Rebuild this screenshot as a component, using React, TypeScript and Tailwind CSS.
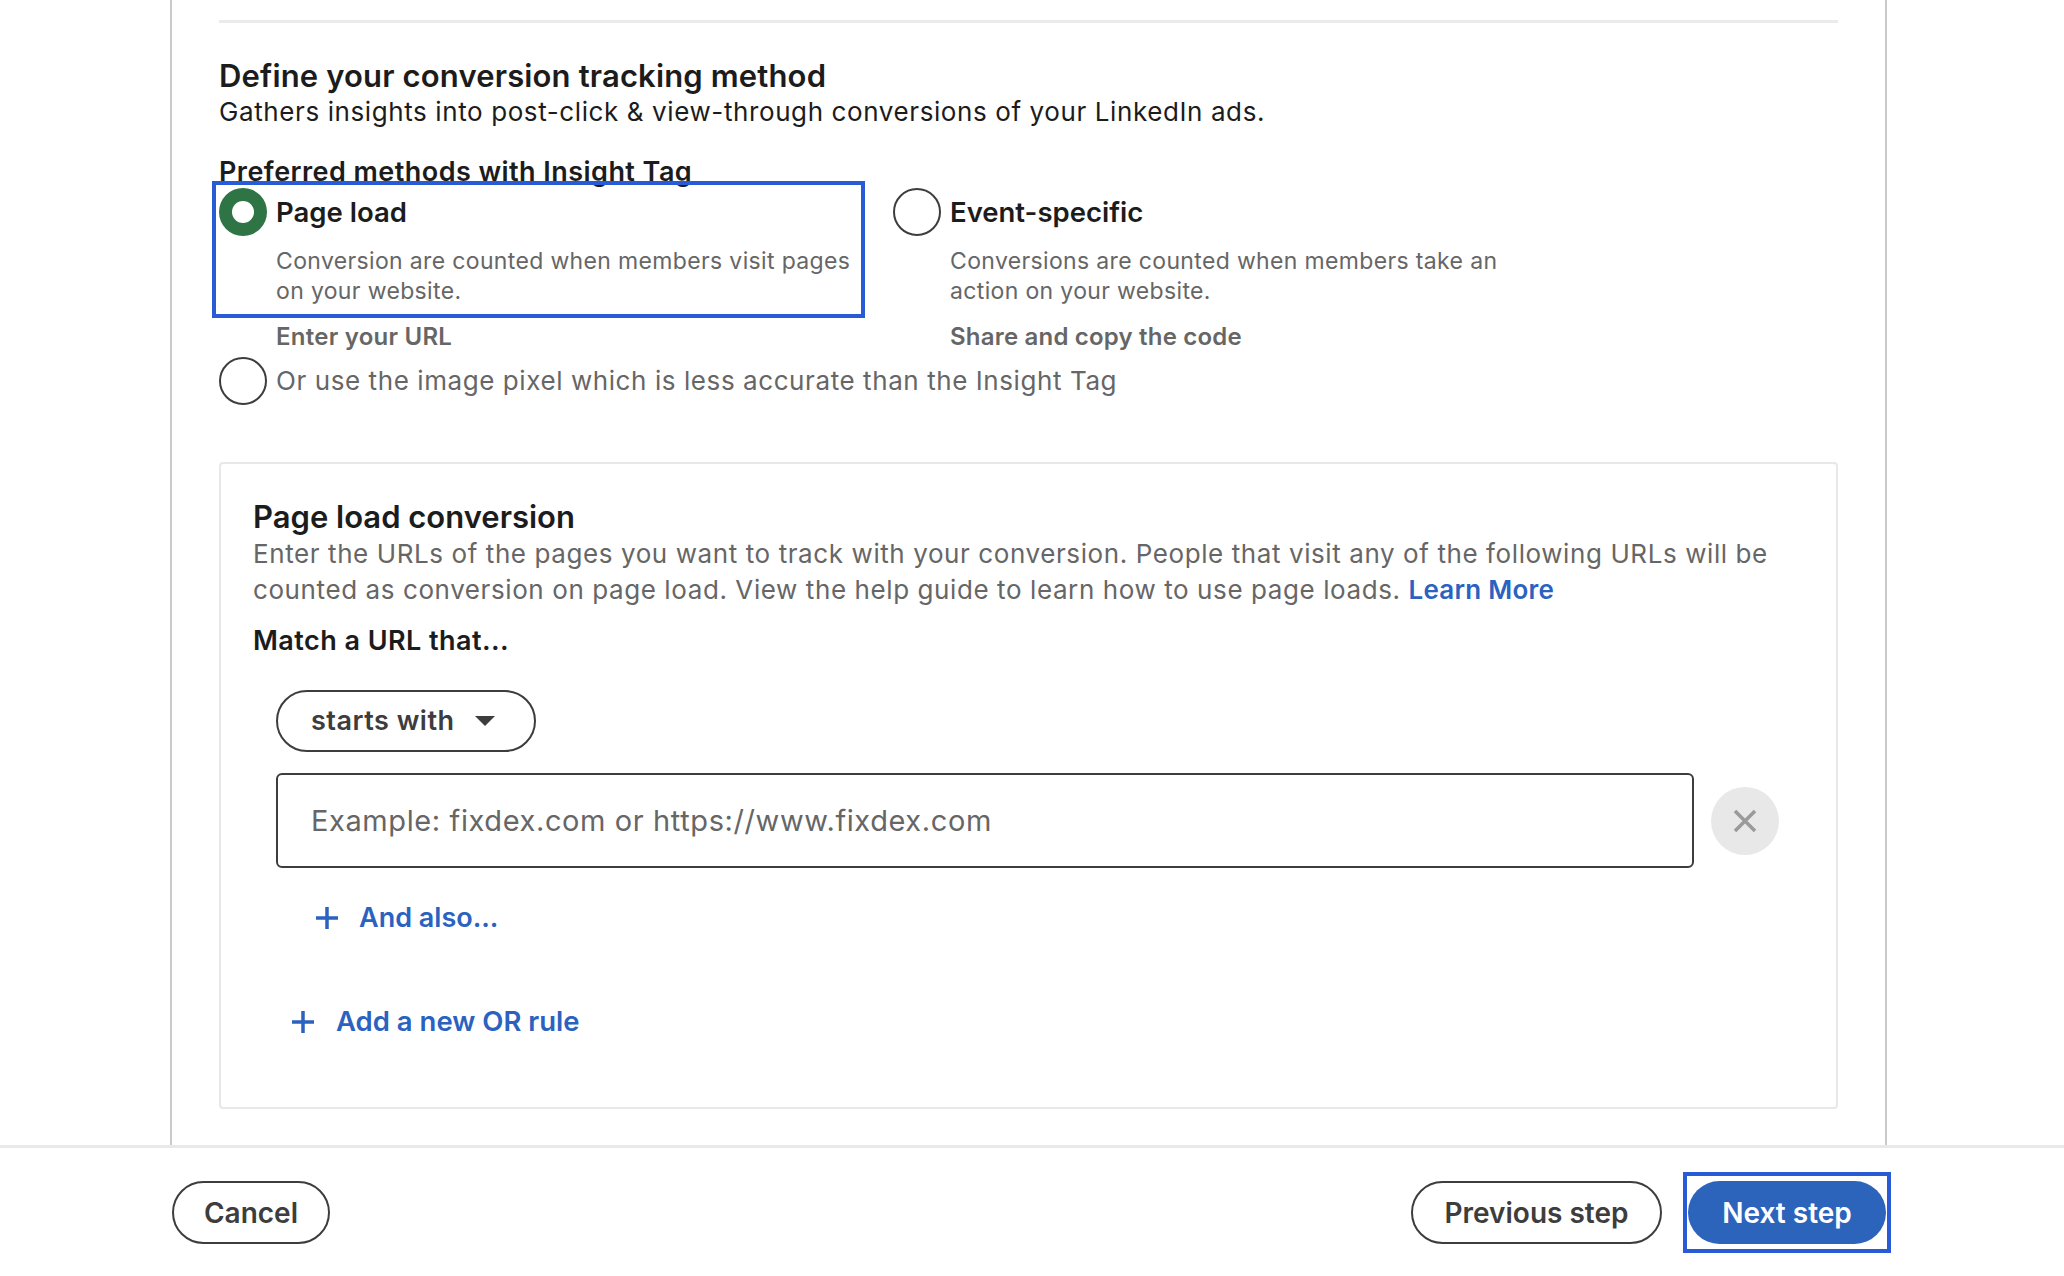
import React from 'react';

function Radio({ checked }: { checked?: boolean }) {
  if (checked) {
    return (
      <div className="w-12 h-12 shrink-0 rounded-full bg-[#2f7444] flex items-center justify-center">
        <div className="w-[22px] h-[22px] rounded-full bg-white" />
      </div>
    );
  }
  return <div className="w-12 h-12 shrink-0 rounded-full border-2 border-[#3d3d3d] bg-white" />;
}

function PlusIcon({ className }: { className?: string }) {
  return (
    <svg className={className} viewBox="0 0 24 24" fill="none" stroke="#2b62bf" strokeWidth={3.5}>
      <path d="M12 1v22M1 12h22" />
    </svg>
  );
}

export default function App() {
  return (
    <div className="w-[2064px] h-[1276px] bg-white overflow-hidden font-['Inter','Liberation_Sans',sans-serif] text-[#1c1c1c]">
      {/* Main panel */}
      <div className="ml-[170px] w-[1717px] h-[1145px] border-x-2 border-[#cacaca] px-[47px] pt-[20px]">
        <div className="h-[3px] bg-[#ebebeb]" />

        <h2 className="mt-[34px] text-[31px] leading-[38px] font-semibold tracking-[0.15px]">
          Define your conversion tracking method
        </h2>
        <p className="text-[26px] leading-[34px] tracking-[0.6px]">
          Gathers insights into post-click &amp; view-through conversions of your LinkedIn ads.
        </p>

        <p className="mt-[28px] text-[27px] leading-[30px] font-semibold tracking-[0.45px]">
          Preferred methods with Insight Tag
        </p>

        <div className="mt-[1px] grid grid-cols-[674px_1fr]">
          {/* Page load option */}
          <div>
            <div className="w-[639px] pb-[5px] outline-4 outline-[#2a5bd7] outline-offset-[3px]">
              <div className="flex items-center gap-[9px]">
                <Radio checked />
                <span className="text-[27.5px] leading-[48px] font-semibold">Page load</span>
              </div>
              <p className="ml-[57px] mt-[10px] text-[23px] leading-[30px] tracking-[0.35px] text-[#666666]">
                Conversion are counted when members visit pages
                <br />
                on your website.
              </p>
            </div>
            <p className="ml-[57px] mt-[11px] text-[24px] leading-[29px] tracking-[0.25px] font-semibold text-[#666666]">
              Enter your URL
            </p>
          </div>

          {/* Event-specific option */}
          <div>
            <div className="pb-[5px]">
              <div className="flex items-center gap-[9px]">
                <Radio />
                <span className="text-[27.5px] leading-[48px] font-semibold">Event-specific</span>
              </div>
              <p className="ml-[57px] mt-[10px] text-[23px] leading-[30px] tracking-[0.35px] text-[#666666]">
                Conversions are counted when members take an
                <br />
                action on your website.
              </p>
            </div>
            <p className="ml-[57px] mt-[11px] text-[24px] leading-[29px] tracking-[0.2px] font-semibold text-[#666666]">
              Share and copy the code
            </p>
          </div>
        </div>

        <div className="mt-[6px] flex items-center gap-[9px]">
          <Radio />
          <span className="text-[26px] leading-[48px] tracking-[0.58px] text-[#666666]">
            Or use the image pixel which is less accurate than the Insight Tag
          </span>
        </div>

        {/* Page load conversion card */}
        <div className="mt-[57px] h-[647px] border-2 border-[#e8e8e8] rounded-[4px] pl-[32px] pt-[34px]">
          <h3 className="text-[31px] leading-[38px] font-semibold">Page load conversion</h3>
          <p className="text-[26px] leading-[36px] tracking-[0.59px] text-[#666666]">
            Enter the URLs of the pages you want to track with your conversion. People that visit any of the following URLs will be
            <br />
            counted as conversion on page load. View the help guide to learn how to use page loads.{' '}
            <span className="font-semibold tracking-[0.25px] text-[#2b62bf]">Learn More</span>
          </p>
          <p className="mt-[15px] text-[27px] leading-[36px] tracking-[0.45px] font-semibold">Match a URL that...</p>

          <div className="ml-[23px] mt-[31px]">
            <button className="w-[260px] h-[62px] border-2 border-[#3d3d3d] rounded-full flex items-center pl-[33px] gap-[20px]">
              <span className="text-[27px] tracking-[0.5px] font-semibold text-[#3d3d3d]">starts with</span>
              <svg width="20" height="10" viewBox="0 0 20 10">
                <path d="M0 0h20L10 10z" fill="#3d3d3d" />
              </svg>
            </button>

            <div className="mt-[21px] flex items-center gap-[17px]">
              <div className="w-[1418px] h-[95px] border-2 border-[#3d3d3d] rounded-[6px] flex items-center pl-[33px]">
                <span className="text-[29px] tracking-[0.6px] text-[#666666]">
                  Example: fixdex.com or https://www.fixdex.com
                </span>
              </div>
              <div className="w-[68px] h-[68px] rounded-full bg-[#e8e8e8] flex items-center justify-center">
                <svg width="24" height="24" viewBox="0 0 24 24" fill="none" stroke="#9a9a9a" strokeWidth={3.5}>
                  <path d="M2 2l20 20M22 2L2 22" />
                </svg>
              </div>
            </div>
          </div>

          <div className="ml-[62px] mt-[30px] h-[40px] flex items-center gap-[20px]">
            <PlusIcon className="w-6 h-6" />
            <span className="text-[27px] font-semibold text-[#2b62bf]">And also...</span>
          </div>

          <div className="ml-[38px] mt-[64px] h-[40px] flex items-center gap-[21px]">
            <PlusIcon className="w-6 h-6" />
            <span className="text-[27.5px] font-semibold text-[#2b62bf]">Add a new OR rule</span>
          </div>
        </div>
      </div>

      {/* Footer */}
      <div className="border-t-[3px] border-[#e9e9e9]">
        <div className="ml-[172px] w-[1719px] pt-[24px] flex items-center justify-between">
          <button className="w-[158px] h-[63px] border-2 border-[#3d3d3d] rounded-full text-[28px] font-semibold text-[#3d3d3d]">
            Cancel
          </button>
          <div className="flex items-center gap-[21px]">
            <button className="w-[251px] h-[63px] border-2 border-[#3d3d3d] rounded-full text-[28px] font-semibold text-[#3d3d3d]">
              Previous step
            </button>
            <div className="border-4 border-[#2a5bd7] px-[1px] py-[5px]">
              <button className="w-[198px] h-[63px] rounded-full bg-[#2c64bc] text-[28px] font-semibold text-white">
                Next step
              </button>
            </div>
          </div>
        </div>
      </div>
    </div>
  );
}
